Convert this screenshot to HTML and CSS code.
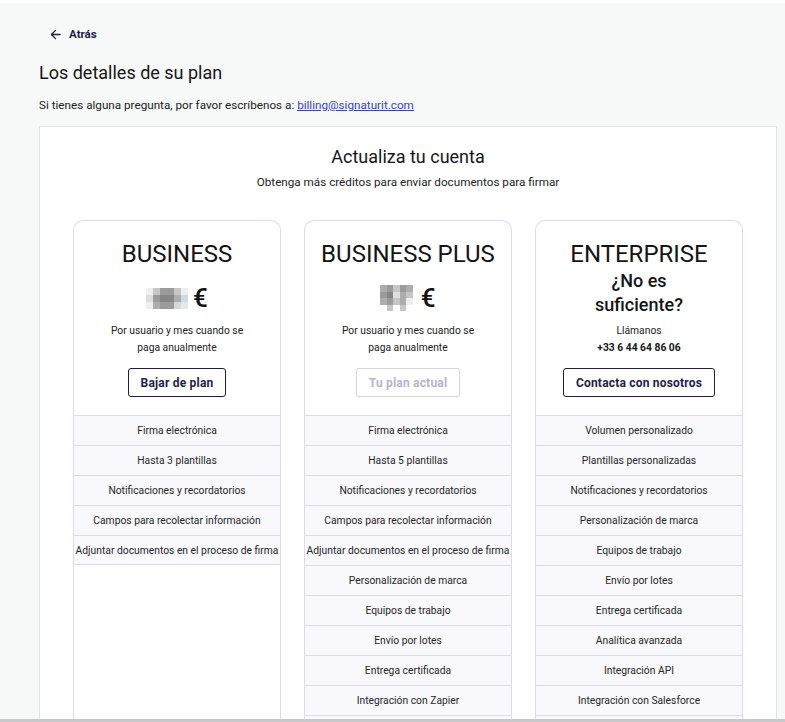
FILE: index.html
```html
<!DOCTYPE html>
<html lang="es">
<head>
<meta charset="utf-8">
<title>Los detalles de su plan</title>
<link rel="stylesheet" href="styles.css">
</head>
<body>
<div class="page">
  <a class="back" href="#">
    <svg class="back-icon" viewBox="0 0 12 12" width="11" height="11"><path d="M11 6H1.5M6 1.5L1.5 6 6 10.5" fill="none" stroke="currentColor" stroke-width="1.4" stroke-linecap="round" stroke-linejoin="round"/></svg>
    <span>Atrás</span>
  </a>
  <h1 class="page-title">Los detalles de su plan</h1>
  <p class="contact">Si tienes alguna pregunta, por favor escríbenos a: <a href="#" class="mail">billing@signaturit.com</a></p>

  <section class="panel">
    <h2 class="panel-title">Actualiza tu cuenta</h2>
    <p class="panel-sub">Obtenga más créditos para enviar documentos para firmar</p>

    <div class="plans">
      <div class="plan">
        <div class="plan-head">
          <h3 class="plan-name">BUSINESS</h3>
          <div class="price">
            <span class="blur blur-a">
              <i class="t1"></i><i class="t3"></i><i class="t5"></i><i class="t5"></i><i class="t3"></i><i class="t1"></i>
              <i class="t2"></i><i class="t5"></i><i class="t6"></i><i class="t6"></i><i class="t4"></i><i class="t7"></i>
              <i class="t1"></i><i class="t4"></i><i class="t5"></i><i class="t5"></i><i class="t7"></i><i class="t8"></i>
            </span>
            <span class="euro">€</span>
          </div>
          <p class="plan-note">Por usuario y mes cuando se<br>paga anualmente</p>
          <button class="btn">Bajar de plan</button>
        </div>
        <ul class="features">
          <li>Firma electrónica</li>
          <li>Hasta 3 plantillas</li>
          <li>Notificaciones y recordatorios</li>
          <li>Campos para recolectar información</li>
          <li>Adjuntar documentos en el proceso de firma</li>
        </ul>
      </div>

      <div class="plan">
        <div class="plan-head">
          <h3 class="plan-name">BUSINESS PLUS</h3>
          <div class="price">
            <span class="blur blur-b">
              <i class="t4"></i><i class="t5"></i><i class="t3"></i><i class="t5"></i><i class="t4"></i>
              <i class="t5"></i><i class="t6"></i><i class="t2"></i><i class="t4"></i><i class="t3"></i>
              <i class="t4"></i><i class="t5"></i><i class="t3"></i><i class="t4"></i><i class="t1"></i>
              <i class="t0"></i><i class="t3"></i><i class="t0"></i><i class="t3"></i><i class="t0"></i>
            </span>
            <span class="euro">€</span>
          </div>
          <p class="plan-note">Por usuario y mes cuando se<br>paga anualmente</p>
          <button class="btn btn-disabled" disabled>Tu plan actual</button>
        </div>
        <ul class="features">
          <li>Firma electrónica</li>
          <li>Hasta 5 plantillas</li>
          <li>Notificaciones y recordatorios</li>
          <li>Campos para recolectar información</li>
          <li>Adjuntar documentos en el proceso de firma</li>
          <li>Personalización de marca</li>
          <li>Equipos de trabajo</li>
          <li>Envío por lotes</li>
          <li>Entrega certificada</li>
          <li>Integración con Zapier</li>
          <li>Analítica avanzada</li>
        </ul>
      </div>

      <div class="plan">
        <div class="plan-head">
          <h3 class="plan-name">ENTERPRISE</h3>
          <p class="question">¿No es<br>suficiente?</p>
          <p class="plan-note call">Llámanos<br><strong>+33 6 44 64 86 06</strong></p>
          <button class="btn">Contacta con nosotros</button>
        </div>
        <ul class="features">
          <li>Volumen personalizado</li>
          <li>Plantillas personalizadas</li>
          <li>Notificaciones y recordatorios</li>
          <li>Personalización de marca</li>
          <li>Equipos de trabajo</li>
          <li>Envío por lotes</li>
          <li>Entrega certificada</li>
          <li>Analítica avanzada</li>
          <li>Integración API</li>
          <li>Integración con Salesforce</li>
          <li>Soporte prioritario</li>
        </ul>
      </div>
    </div>
  </section>
</div>
<div class="window-edge"></div>
</body>
</html>
```

FILE: styles.css
```css
* { box-sizing: border-box; }

html, body {
  margin: 0;
  padding: 0;
}

body {
  background: #f7f8f8;
  border-top: 3px solid #ffffff;
  font-family: Roboto, "Liberation Sans", Arial, sans-serif;
  color: #1c1c1c;
}

.page {
  padding: 21px 8px 0 39px;
}

.back {
  display: flex;
  align-items: center;
  gap: 8px;
  padding-left: 11px;
  height: 20px;
  color: #1f1d4d;
  text-decoration: none;
  font-size: 11.5px;
  font-weight: 700;
}

.back-icon { display: block; }

.page-title {
  margin: 17px 0 0;
  font-size: 18px;
  font-weight: 400;
  line-height: 24px;
  color: #161616;
}

.contact {
  margin: 12px 0 0;
  font-size: 11.7px;
  line-height: 16px;
  color: #222;
}

.mail {
  color: #3a3fd4;
  text-decoration: underline;
}

.panel {
  margin-top: 13px;
  background: #fff;
  border: 1px solid #e2e4e6;
  padding: 19px 0 0;
  text-align: center;
}

.panel-title {
  margin: 0;
  font-size: 18px;
  font-weight: 400;
  line-height: 22px;
  color: #161616;
}

.panel-sub {
  margin: 7px 0 0;
  font-size: 11.7px;
  line-height: 15px;
  color: #222;
}

.plans {
  margin-top: 30px;
  display: grid;
  grid-template-columns: repeat(3, 208px);
  justify-content: center;
  gap: 23px;
}

.plan {
  border: 1px solid #dcdaf1;
  border-bottom: none;
  border-radius: 10px 10px 0 0;
  background: #fff;
  display: flex;
  flex-direction: column;
}

.plan-head {
  padding-top: 19px;
  height: 194px;
  display: flex;
  flex-direction: column;
  align-items: center;
}

.plan-name {
  margin: 0;
  font-size: 24px;
  font-weight: 400;
  line-height: 28px;
  color: #141414;
}

.price {
  margin-top: 16px;
  height: 28px;
  display: flex;
  align-items: center;
  gap: 5px;
}

.euro {
  font-size: 26px;
  font-weight: 500;
  line-height: 28px;
  color: #111;
}

.blur {
  display: grid;
}

.blur i { display: block; }

.blur-a {
  grid-template-columns: repeat(6, 7px);
  grid-auto-rows: 7px;
}

.blur-b {
  grid-template-columns: repeat(5, 6.5px);
  grid-auto-rows: 6.5px;
  margin-right: 3px;
}

.t0 { background: #ffffff; }
.t1 { background: #eeeeee; }
.t2 { background: #dedede; }
.t3 { background: #c6c6c6; }
.t4 { background: #adadad; }
.t5 { background: #9b9b9b; }
.t6 { background: #868686; }
.t7 { background: #d2d8dd; }
.t8 { background: #e3e8ec; }

.plan-note {
  margin: 10px 0 0;
  font-size: 10.3px;
  line-height: 17px;
  color: #222;
}

.question {
  margin: 1px 0 0;
  font-size: 18px;
  font-weight: 500;
  line-height: 24px;
  color: #141414;
}

.call {
  margin-top: 5px;
}

.call strong {
  font-weight: 700;
  color: #161616;
}

.btn {
  margin-top: 12px;
  height: 29px;
  padding: 0 12px;
  background: #fff;
  border: 1px solid #1e1c3f;
  border-radius: 3px;
  font-family: Roboto, "Liberation Sans", Arial, sans-serif;
  font-size: 12px;
  font-weight: 700;
  color: #1f1d4d;
  letter-spacing: 0.2px;
}

.btn-disabled {
  border-color: #d5d4df;
  color: #b7b5c9;
}

.features {
  list-style: none;
  margin: 0;
  padding: 0;
}

.features li {
  height: 30px;
  line-height: 29px;
  border-top: 1px solid #dcdaf1;
  background: #f8f8fd;
  font-size: 10.3px;
  color: #262626;
  white-space: nowrap;
}

.features li:last-child {
  border-bottom: 1px solid #dcdaf1;
}

.window-edge {
  position: fixed;
  left: 0;
  right: 0;
  bottom: 0;
  height: 3px;
  background: #c8c9ca;
}
```
